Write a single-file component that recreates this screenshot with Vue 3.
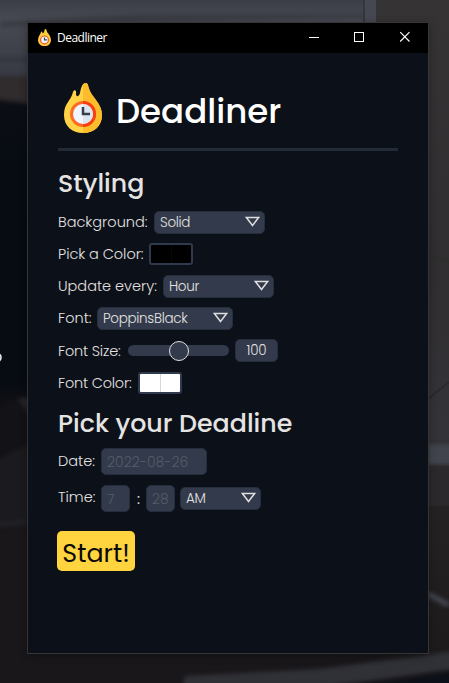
<script setup>
import { ref } from 'vue'

const rows = [
  { key: 'background', label: 'Background:', kind: 'select', value: 'Solid' },
  { key: 'color', label: 'Pick a Color:', kind: 'swatch', tone: 'black' },
  { key: 'update', label: 'Update every:', kind: 'select', value: 'Hour' },
  { key: 'font', label: 'Font:', kind: 'select', value: 'PoppinsBlack' },
  { key: 'size', label: 'Font Size:', kind: 'slider', value: 100 },
  { key: 'fontcolor', label: 'Font Color:', kind: 'swatch', tone: 'white' },
]
const date = ref('2022-08-26')
const hour = ref('7')
const minute = ref('28')
</script>

<template>
  <div class="desktop">
    <svg class="wallpaper" width="449" height="683" viewBox="0 0 449 683" aria-hidden="true">
      <defs>
        <linearGradient id="top" x1="0" y1="0" x2="0" y2="1">
          <stop offset="0" stop-color="#3c3e47" />
          <stop offset=".25" stop-color="#474a53" />
          <stop offset=".6" stop-color="#40424b" />
          <stop offset="1" stop-color="#363942" />
        </linearGradient>
        <linearGradient id="left" x1="0" y1="0" x2="0" y2="1">
          <stop offset="0" stop-color="#0c0e14" />
          <stop offset=".2" stop-color="#070c13" />
          <stop offset=".9" stop-color="#070b12" />
          <stop offset="1" stop-color="#111115" />
        </linearGradient>
        <linearGradient id="right" x1="0" y1="0" x2="0" y2="1">
          <stop offset="0" stop-color="#363335" />
          <stop offset=".4" stop-color="#302e30" />
          <stop offset=".64" stop-color="#343338" />
          <stop offset=".68" stop-color="#272425" />
          <stop offset="1" stop-color="#1c191b" />
        </linearGradient>
        <filter id="soft" x="-30%" y="-30%" width="160%" height="160%" color-interpolation-filters="sRGB"><feGaussianBlur stdDeviation="2" /></filter>
      </defs>
      <rect width="449" height="683" fill="#19171a" />
      <rect width="449" height="80" fill="url(#top)" />
      <g filter="url(#soft)">
        <path d="M0 22 L140 14 H365 V18 L140 22 L0 27Z" fill="#393b43" />
        <path d="M-9 57H36V62H-9Z" fill="#34363f" />
        <path d="M-9 76H36V104L-9 98Z" fill="#302b2d" />
        <path d="M-9 101L36 106V410H-9Z" fill="url(#left)" />
        <path d="M-9 462L30 443V398H18L-9 410Z" fill="#131216" />
        <path d="M36 398H17L36 424Z" fill="#252429" />
        <path d="M-9 462L30 443V520H-9Z" fill="#1b1a1e" />
        <path d="M-9 522L30 519V524L-9 528Z" fill="#202228" />
      </g>
      <rect x="363" width="13" height="23" fill="#454850" />
      <rect x="376" width="73" height="683" fill="url(#right)" />
      <rect x="363" width="2" height="23" fill="#34363d" />
      <path d="M428 256L449 262" stroke="#2b3029" stroke-width="2" />
      <path d="M428 399L449 382" stroke="#2b292c" stroke-width="2" />
      <rect x="410" y="444" width="60" height="21" fill="#42444d" filter="url(#soft)" />
      <rect x="428" y="466" width="21" height="40" fill="#2b292b" />
      <path d="M428 594L449 605" stroke="#454752" stroke-width="5" filter="url(#soft)" />
      <rect x="-9" y="654" width="467" height="40" fill="#19171a" />
      <path d="M185 676L320 669L455 651V669L300 690H182Z" fill="#303137" filter="url(#soft)" />
      <path d="M370 685L455 672V690H360Z" fill="#0c1018" filter="url(#soft)" />
      <circle cx="-3" cy="357.500" r="4" fill="none" stroke="#eee" stroke-width="1.600" />
    </svg>

    <main class="window">
      <header class="titlebar">
        <svg class="mini" viewBox="0 0 38 50" width="13" height="17">
          <path d="M22 0C25 0 25 6 28 11C33 17 38 24 38 32C38 43 30 50 19 50S0 43 0 32C0 22 7 16 9 9C10 6 13 7 13 11C14 15 17 11 18 8C19 4 19 0 22 0Z" fill="#fecd3c" />
          <circle cx="19" cy="32" r="11.5" fill="#eef3fd" stroke="#f4511e" stroke-width="3.5" />
          <path d="M19 25V32H26" fill="none" stroke="#37474f" stroke-width="3.5" />
        </svg>
        <span class="caption">Deadliner</span>
        <svg class="controls" width="102" height="12" viewBox="0 0 102 12" fill="none" stroke="#fff">
          <path d="M0 6.5H10" />
          <rect x="45.500" y="1.500" width="9" height="9" />
          <path d="M91.200 1.200L100.500 10.500M100.500 1.200L91.200 10.500" stroke-width="1.150" />
        </svg>
      </header>

      <section class="content">
        <div class="brand">
          <svg class="flame" viewBox="0 0 38 50" width="38" height="50">
            <path d="M22 0C24 0 24 3 25 6C27 14 38 20 38 32C38 43 30 50 19 50S0 43 0 32C0 20 7 18 9 9C10 6 13 7 12 11C12 14 15 14 16 10C17 5 18 0 22 0Z" fill="#ffd345" />
            <path d="M19 2C20 0 24-1 24.500 4C27 14 38 20 38 32C38 43 30 50 19 50Z" fill="#fdbc2c" />
            <circle cx="19" cy="31" r="13" fill="#ff6a25" />
            <path d="M19 18A13 13 0 0 1 19 44Z" fill="#f83f0d" />
            <circle cx="19" cy="31" r="10" fill="#f1f5ff" />
            <path d="M19 21A10 10 0 0 1 19 41Z" fill="#dce4f2" />
            <path d="M19 24V31H26" fill="none" stroke="#37404a" stroke-width="2.500" />
          </svg>
          <h1><span>Deadliner</span></h1>
        </div>
        <div class="rule"></div>

        <h2 class="styling">Styling</h2>
        <div v-for="row in rows" :key="row.key" class="row" :class="row.key">
          <label><span>{{ row.label }}</span></label>
          <div v-if="row.kind === 'select'" class="select">
            <span>{{ row.value }}</span>
            <svg width="15" height="11" viewBox="0 0 15 11"><path d="M1.400 1.500H13.600L7.500 9.500Z" /></svg>
          </div>
          <div v-else-if="row.kind === 'swatch'" class="swatch" :class="row.tone"><i></i></div>
          <template v-else>
            <div class="track"><div class="thumb"></div></div>
            <div class="number">{{ row.value }}</div>
          </template>
        </div>

        <h2 class="deadline">Pick your Deadline</h2>
        <div class="row date">
          <label><span>Date:</span></label>
          <div class="field wide"><span>{{ date }}</span></div>
        </div>
        <div class="row time">
          <label><span>Time:</span></label>
          <div class="field"><span>{{ hour }}</span></div>
          <span class="colon">:</span>
          <div class="field"><span>{{ minute }}</span></div>
          <div class="select">
            <span>AM</span>
            <svg width="15" height="11" viewBox="0 0 15 11"><path d="M1.400 1.500H13.600L7.500 9.500Z" /></svg>
          </div>
        </div>
        <button class="start"><span>Start!</span></button>
      </section>
    </main>
  </div>
</template>

<style>
html, body { margin: 0; background: #19171a; overflow: hidden; }
</style>

<style scoped>
* { box-sizing: border-box; }
.desktop { position: relative; width: 449px; height: 683px; padding: 22px 0 0 27px; overflow: hidden; font-family: Poppins, Inter, sans-serif; color: #e4e2e0; }
.wallpaper { position: absolute; inset: 0; }
.window { position: relative; width: 402px; height: 632px; border: 1px solid #353436; background: #0c1019; box-shadow: 0 2px 8px rgba(0, 0, 0, .3); }
.titlebar { display: flex; align-items: center; height: 30px; padding: 0 17px 0 10px; background: #000; }
.mini { margin-top: -1px; }
.caption { margin-left: 6px; font: 12px/16px "Open Sans", sans-serif; letter-spacing: -.5px; color: #fff; }
.controls { margin: -2px 0 0 auto; }
.content { display: flex; flex-direction: column; padding: 0 30px; white-space: nowrap; }
.brand { display: flex; height: 95px; padding: 30px 0 0 6px; }
h1, h2 { margin: 0; font-weight: 500; }
h1 { margin-left: 14px; padding-top: 7px; font-size: 34px; line-height: 42px; color: #fff; letter-spacing: 0; }
.rule { height: 3px; background: #232b38; }
h2 { font-size: 25.300px; line-height: 34px; color: #e5e4e3; }
.styling { height: 55px; padding-top: 15px; }
.row { display: flex; align-items: center; height: 32px; }
.row.size { height: 33px; }
.row.fontcolor { height: 31px; }
label { flex: none; font-size: 14.500px; line-height: 20px; font-weight: 300; letter-spacing: 0; }
.background label { width: 96px; }
.color label { width: 91px; letter-spacing: -.05px; }
.update label { width: 105px; }
.font label { width: 39px; }
.size label { width: 70px; letter-spacing: -.2px; }
.fontcolor label { width: 80px; letter-spacing: -.22px; }
.select { display: flex; align-items: center; justify-content: space-between; width: 111px; height: 23px; padding: 0 4px 0 5px; border: 1px solid #252e3d; border-radius: 5px; background: #323a4b; font-size: 13.500px; font-weight: 300; }
.select span { padding-top: 1px; letter-spacing: -.3px; }
.select svg { margin-top: -1px; fill: none; stroke: #dfdddd; stroke-width: 1.500; }
.font .select { width: 136px; }
.swatch { display: flex; justify-content: center; width: 44px; height: 22px; border: 2px solid #303a4d; border-radius: 3px; background: #000; }
.swatch.white { background: #fff; }
.swatch i { width: 1px; background: #080808; }
.white i { background: #d8d8d8; }
.track { display: flex; align-items: center; justify-content: center; width: 101px; height: 11px; border-radius: 6px; background: #323a4b; }
.thumb { flex: none; width: 20px; height: 20px; border: 1.500px solid #e0dfdf; border-radius: 50%; background: #323a4b; }
.number { display: flex; align-items: center; justify-content: center; width: 43px; height: 23px; margin-left: 6px; padding-top: 1px; border: 1px solid #252e3d; border-radius: 5px; background: #323a4b; font-size: 13.500px; letter-spacing: -.2px; font-weight: 300; }
.deadline { height: 47px; padding-top: 8px; }
.row.date { height: 33px; }
.date label { width: 43px; padding-bottom: 1px; }
.time label { width: 43px; padding-bottom: 3px; }
.row.time { height: 40px; }
.field { display: flex; align-items: center; width: 29px; height: 27px; padding: 2px 5px 0; border: 1px solid #252e3d; border-radius: 5px; background: #323a4b; color: #555d6a; font-size: 14px; font-weight: 300; }
.field.wide { width: 106px; }
.colon { width: 16px; padding: 3px 0 0 1px; text-align: center; font-size: 14px; }
.time .select { width: 81px; margin-left: 5px; }
.start { width: 78px; height: 40px; margin: 13px 0 0 -1px; padding: 4px 0 0; border: 0; border-radius: 5px; background: #ffd43f; color: #090909; font: 400 25.300px/36px Poppins, Inter, sans-serif; }
</style>
